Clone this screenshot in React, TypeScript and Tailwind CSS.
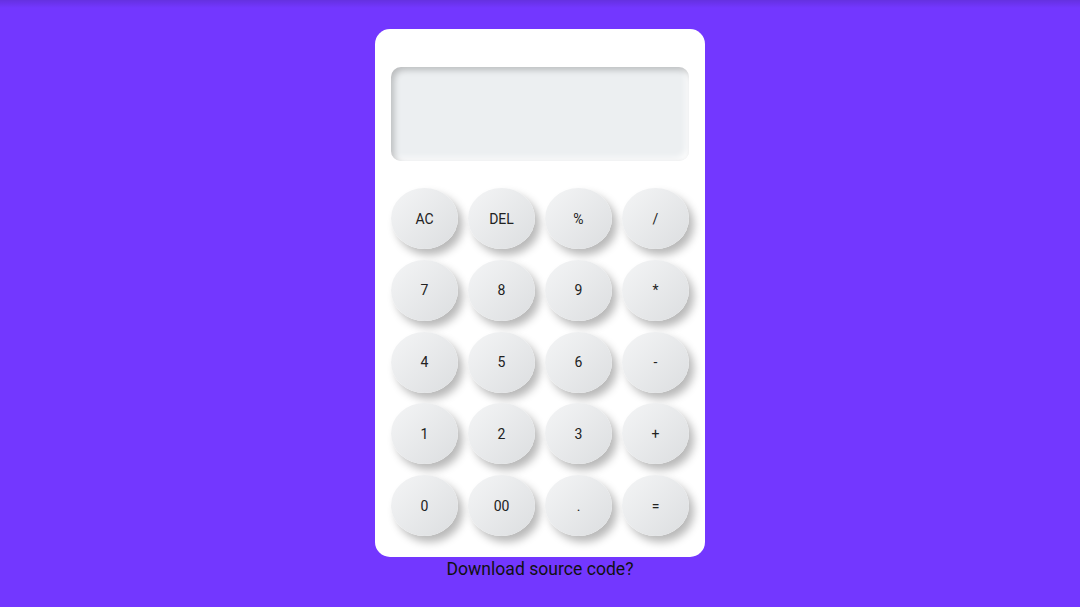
import React from "react";

const keys = ["AC", "DEL", "%", "/", "7", "8", "9", "*", "4", "5", "6", "-", "1", "2", "3", "+", "0", "00", ".", "="];

export default function App() {
  return (
    <div
      className="relative w-full h-[607px] bg-[#7337ff] flex flex-col items-center pt-[29px] overflow-hidden"
      style={{ fontFamily: "Roboto, 'Liberation Sans', sans-serif" }}
    >
      <div className="absolute top-0 left-0 right-0 h-[8px] bg-gradient-to-b from-[rgba(0,0,0,0.12)] to-transparent" />
      <div className="w-[330px] h-[528px] bg-white rounded-[15px] px-[16px] pt-[38px]">
        <div className="w-[298px] h-[94px] rounded-[10px] bg-[#eceff1] shadow-[inset_3px_3px_6px_rgba(0,0,0,0.22),inset_-3px_-3px_6px_rgba(255,255,255,0.9)]" />
        <div className="mt-[27px] grid grid-cols-[repeat(4,67px)] gap-x-[10px] gap-y-[10.75px]">
          {keys.map((k) => (
            <button
              key={k}
              className="w-[67px] h-[61px] rounded-[50%] bg-[linear-gradient(135deg,#f4f5f6,#dcdee0)] shadow-[5px_6px_9px_rgba(0,0,0,0.28)] text-[14px] text-[#222] flex items-center justify-center pt-[1px]"
            >
              {k}
            </button>
          ))}
        </div>
      </div>
      <div className="text-[17.6px] leading-[22px] text-[#111] mt-[1px]">Download source code?</div>
    </div>
  );
}
